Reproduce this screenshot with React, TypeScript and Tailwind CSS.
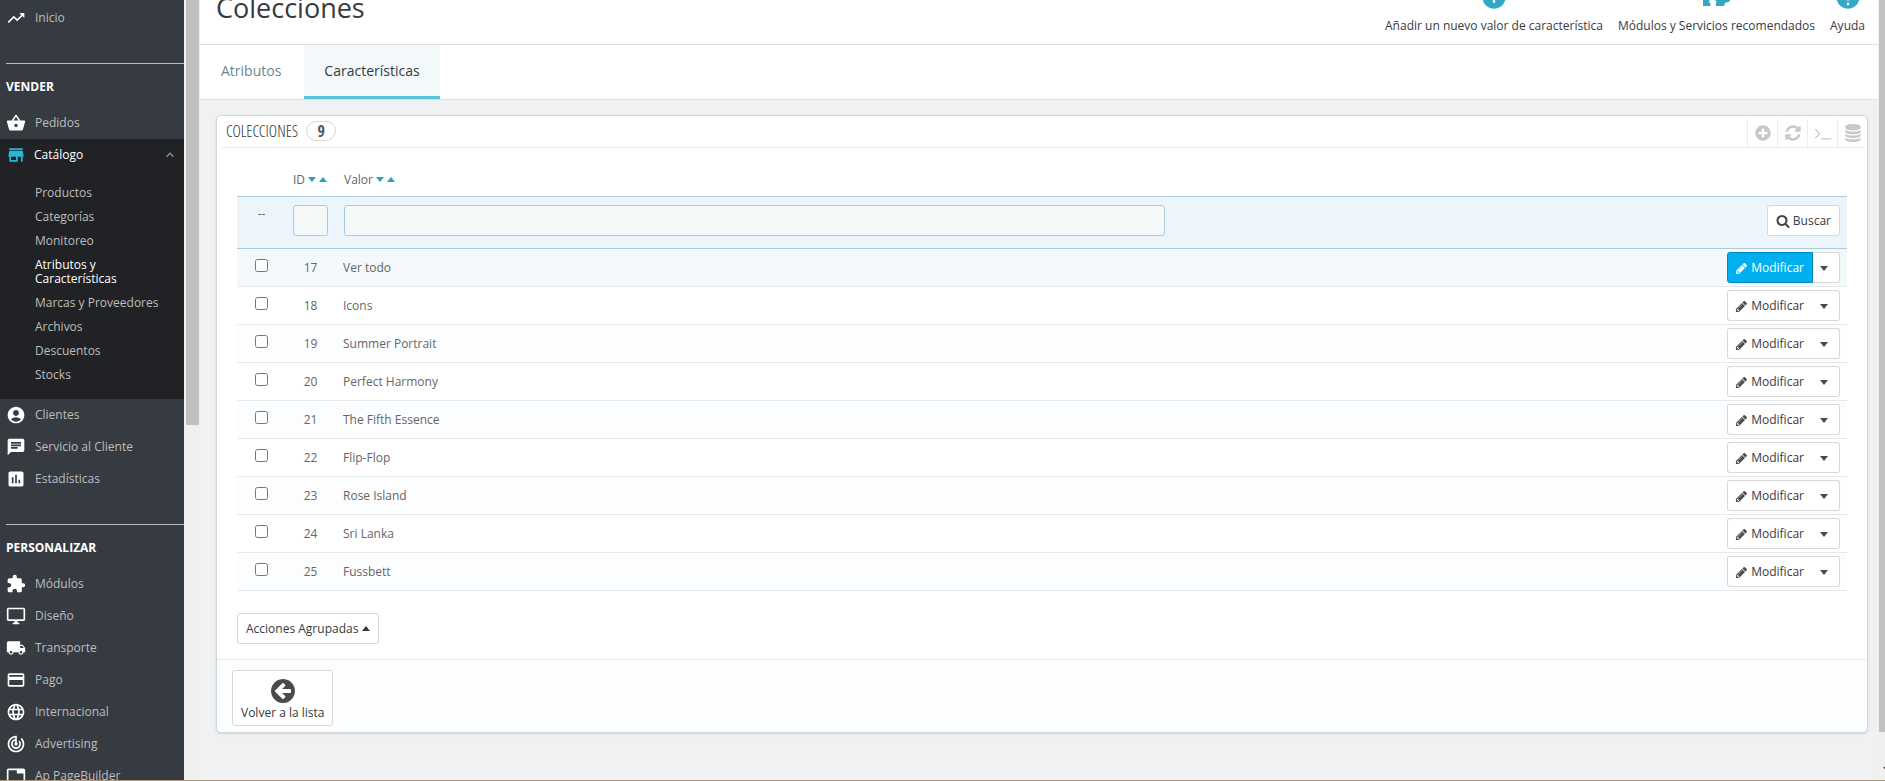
import React, { useState } from 'react';
import type { IconType } from 'react-icons';
import {
  MdAccountCircle,
  MdAddCircle,
  MdAssessment,
  MdChat,
  MdCreditCard,
  MdExtension,
  MdHelp,
  MdKeyboardArrowUp,
  MdLanguage,
  MdLocalShipping,
  MdOutlineDesktopWindows,
  MdShoppingBasket,
  MdStore,
  MdTab,
  MdTrackChanges,
  MdTrendingUp,
} from 'react-icons/md';

const GLYPHS = {
  pencil: 'M491 1536l91-91-235-235-91 91v107h128v128h107zm523-928q0-22-22-22-10 0-17 7l-542 542q-7 7-7 17 0 22 22 22 10 0 17-7l542-542q7-7 7-17zm-54-192l416 416-832 832h-416v-416zm683 96q0 53-37 90l-166 166-416-416 166-165q36-38 90-38 53 0 91 38l235 234q37 39 37 91z',
  search: 'M1216 832q0-185-131.5-316.5t-316.5-131.5-316.5 131.5-131.5 316.5 131.5 316.5 316.5 131.5 316.5-131.5 131.5-316.5zm512 832q0 52-38 90t-90 38q-54 0-90-38l-343-342q-179 124-399 124-143 0-273.5-55.5t-225-150-150-225-55.5-273.5 55.5-273.5 150-225 225-150 273.5-55.5 273.5 55.5 225 150 150 225 55.5 273.5q0 220-124 399l343 343q37 37 37 90z',
  plus: 'M1344 960v-128q0-26-19-45t-45-19h-256v-256q0-26-19-45t-45-19h-128q-26 0-45 19t-19 45v256h-256q-26 0-45 19t-19 45v128q0 26 19 45t45 19h256v256q0 26 19 45t45 19h128q26 0 45-19t19-45v-256h256q26 0 45-19t19-45zm320-64q0 209-103 385.5t-279.5 279.5-385.5 103-385.5-103-279.5-279.5-103-385.5 103-385.5 279.5-279.5 385.5-103 385.5 103 279.5 279.5 103 385.5z',
  refresh: 'M1639 1056q0 5-1 7-64 268-268 434.5t-478 166.5q-146 0-282.5-55t-243.5-157l-129 129q-19 19-45 19t-45-19-19-45v-448q0-26 19-45t45-19h448q26 0 45 19t19 45-19 45l-137 137q71 66 161 102t187 36q134 0 250-65t186-179q11-17 53-117 8-23 30-23h192q13 0 22.5 9.5t9.5 22.5zm25-800v448q0 26-19 45t-45 19h-448q-26 0-45-19t-19-45 19-45l138-138q-148-137-349-137-134 0-250 65t-186 179q-11 17-53 117-8 23-30 23h-199q-13 0-22.5-9.5t-9.5-22.5v-7q65-268 270-434.5t480-166.5q146 0 284 55.5t245 156.5l130-129q19-19 45-19t45 19 19 45z',
  terminal: 'M649 983l-466 466q-10 10-23 10t-23-10l-50-50q-10-10-10-23t10-23l393-393-393-393q-10-10-10-23t10-23l50-50q10-10 23-10t23 10l466 466q10 10 10 23t-10 23zm1079 457v64q0 14-9 23t-23 9h-960q-14 0-23-9t-9-23v-64q0-14 9-23t23-9h960q14 0 23 9t9 23z',
  database: 'M896 768q237 0 443-43t325-127v170q0 69-103 128t-280 93.5-385 34.5-385-34.5-280-93.5-103-128v-170q119 84 325 127t443 43zm0 768q237 0 443-43t325-127v170q0 69-103 128t-280 93.5-385 34.5-385-34.5-280-93.5-103-128v-170q119 84 325 127t443 43zm0-384q237 0 443-43t325-127v170q0 69-103 128t-280 93.5-385 34.5-385-34.5-280-93.5-103-128v-170q119 84 325 127t443 43zm0-1152q208 0 385 34.5t280 93.5 103 128v128q0 69-103 128t-280 93.5-385 34.5-385-34.5-280-93.5-103-128v-128q0-69 103-128t280-93.5 385-34.5z',
  back: 'M1408 960v-128q0-26-19-45t-45-19h-502l189-189q19-19 19-45t-19-45l-91-91q-18-18-45-18t-45 18l-362 362-91 91q-18 18-18 45t18 45l91 91 362 362q18 18 45 18t45-18l91-91q18-18 18-45t-18-45l-189-189h502q26 0 45-19t19-45zm256-64q0 209-103 385.5t-279.5 279.5-385.5 103-385.5-103-279.5-279.5-103-385.5 103-385.5 279.5-279.5 385.5-103 385.5 103 279.5 279.5 103 385.5z',
};

const Glyph = ({ name, className }: { name: keyof typeof GLYPHS; className: string }) => (
  <svg viewBox="0 0 1792 1792" fill="currentColor" aria-hidden="true" className={className}>
    <path d={GLYPHS[name]} />
  </svg>
);

const Caret = ({ up = false, className = 'w-2' }: { up?: boolean; className?: string }) => (
  <svg viewBox="0 0 8 5" fill="currentColor" aria-hidden="true" className={className}>
    <path d={up ? 'M0 5L4 0L8 5Z' : 'M0 0L4 5L8 0Z'} />
  </svg>
);

// Puzzle piece used by the modules button of the toolbar
const PuzzleIcon = ({ className }: { className?: string }) => (
  <svg viewBox="0 0 28 28" fill="currentColor" aria-hidden="true" className={className}>
    <path d="M1 7h7c1-1-1-2-1-4 0-4 8-4 8 0 0 2-2 3-1 4h8v7c1 1 2-1 4-1 3 0 3 6 0 6l-3 1-1 3h-8c-1-2 1-3 0-5-1-2-6-2-7 0 0 2 3 3 1 5H1z" />
  </svg>
);

interface MenuEntry {
  icon: IconType;
  label: string;
}

const SELL_MENU: MenuEntry[] = [
  { icon: MdAccountCircle, label: 'Clientes' },
  { icon: MdChat, label: 'Servicio al Cliente' },
  { icon: MdAssessment, label: 'Estadísticas' },
];

const CUSTOMIZE_MENU: MenuEntry[] = [
  { icon: MdExtension, label: 'Módulos' },
  { icon: MdOutlineDesktopWindows, label: 'Diseño' },
  { icon: MdLocalShipping, label: 'Transporte' },
  { icon: MdCreditCard, label: 'Pago' },
  { icon: MdLanguage, label: 'Internacional' },
  { icon: MdTrackChanges, label: 'Advertising' },
  { icon: MdTab, label: 'Ap PageBuilder' },
];

const CATALOG_LINKS = [
  'Productos',
  'Categorías',
  'Monitoreo',
  'Atributos y Características',
  'Marcas y Proveedores',
  'Archivos',
  'Descuentos',
  'Stocks',
];

const ROWS = [
  { id: 17, value: 'Ver todo' },
  { id: 18, value: 'Icons' },
  { id: 19, value: 'Summer Portrait' },
  { id: 20, value: 'Perfect Harmony' },
  { id: 21, value: 'The Fifth Essence' },
  { id: 22, value: 'Flip-Flop' },
  { id: 23, value: 'Rose Island' },
  { id: 24, value: 'Sri Lanka' },
  { id: 25, value: 'Fussbett' },
];

const MenuItem = ({ icon: Icon, label }: MenuEntry) => (
  <li>
    <a href="#" className="flex h-8 items-center gap-[9px] pl-1.5 text-[#bebebe] hover:text-white">
      <Icon className="size-5 text-white" />
      {label}
    </a>
  </li>
);

const MenuTitle = ({ children }: { children: React.ReactNode }) => (
  <h2 className="ml-1.5 mt-[29px] h-11 border-t border-[#bebebe] pt-[15px] font-bold leading-4 text-white">
    {children}
  </h2>
);

const Sidebar = () => (
  <nav className="h-screen w-46 shrink-0 overflow-hidden bg-[#363a41] pt-0.5">
    <ul>
      <MenuItem icon={MdTrendingUp} label="Inicio" />
    </ul>
    <MenuTitle>VENDER</MenuTitle>
    <ul>
      <MenuItem icon={MdShoppingBasket} label="Pedidos" />
      <li className="bg-[#202226] pb-3">
        <a href="#" className="flex h-8 items-center gap-2 pl-1.5 pr-1.5 text-white">
          <MdStore className="size-5 text-[#25b9d7]" />
          <span className="flex-1">Catálogo</span>
          <MdKeyboardArrowUp className="size-4 text-[#8a8e93]" />
        </a>
        <ul className="pt-2.5">
          {CATALOG_LINKS.map(label => (
            <li key={label}>
              <a
                href="#"
                className={`block py-[5px] pl-[35px] pr-5 leading-[14px] ${
                  label.startsWith('Atributos') ? 'text-white' : 'text-[#bebebe]'
                }`}
              >
                {label}
              </a>
            </li>
          ))}
        </ul>
      </li>
      {SELL_MENU.map(item => <MenuItem key={item.label} {...item} />)}
    </ul>
    <MenuTitle>PERSONALIZAR</MenuTitle>
    <ul>
      {CUSTOMIZE_MENU.map(item => <MenuItem key={item.label} {...item} />)}
    </ul>
  </nav>
);

interface ToolbarButtonProps {
  icon: React.ComponentType<{ className?: string }>;
  label: string;
}

const ToolbarButton = ({ icon: Icon, label }: ToolbarButtonProps) => (
  <a href="#" className="flex flex-col items-center text-[#363a41]">
    <Icon className="size-7 text-[#34a9c6]" />
    <span className="mt-[5px] leading-5">{label}</span>
  </a>
);

const PageHeader = () => (
  <header className="border-b border-[#dadfe2] bg-white">
    <div className="flex h-11 items-end justify-between pl-4 pr-[13px]">
      <h1 className="pb-[18px] text-[27px] leading-9 text-[#363a41]">Colecciones</h1>
      <div className="flex gap-[15px] pb-2">
        <ToolbarButton icon={MdAddCircle} label="Añadir un nuevo valor de característica" />
        <ToolbarButton icon={PuzzleIcon} label="Módulos y Servicios recomendados" />
        <ToolbarButton icon={MdHelp} label="Ayuda" />
      </div>
    </div>
    <div className="flex h-[55px] border-t border-[#dadfe2] text-sm">
      <a href="#" className="flex items-center pb-0.5 pl-[21px] pr-[23px] text-[#6c868e]">Atributos</a>
      <a href="#" className="flex items-center border-b-3 border-[#5bc4da] bg-[#f3f8fb] px-5 pt-px text-[#363a41]">
        Características
      </a>
    </div>
  </header>
);

const SortHeader = ({ label }: { label: string }) => (
  <span className="flex items-center gap-[3px]">
    {label}
    <button type="button" aria-label={`${label} descendente`} className="text-[#2a9fc4]"><Caret className="w-2" /></button>
    <button type="button" aria-label={`${label} ascendente`} className="text-[#2a9fc4]"><Caret up className="w-2" /></button>
  </span>
);

const INPUT = 'block h-[31px] w-full rounded-[3px] border border-[#a9cbdc] bg-[#f5f8f9] px-2';
const BUTTON = 'flex h-[31px] items-center border border-[#d8d8d8] bg-white pt-px text-[#363a41]';

const CollectionsTable = () => {
  const [selected, setSelected] = useState<number[]>([]);

  const toggle = (id: number) =>
    setSelected(prev => (prev.includes(id) ? prev.filter(x => x !== id) : [...prev, id]));

  return (
    <table className="w-full table-fixed border-collapse text-left text-[#666]">
      <colgroup>
        <col className="w-[49px]" />
        <col className="w-[51px]" />
        <col className="w-[52%]" />
        <col />
      </colgroup>
      <thead>
        <tr className="h-8">
          <th aria-label="Selección" />
          <th className="px-[7px] font-normal"><SortHeader label="ID" /></th>
          <th className="px-[7px] font-normal"><SortHeader label="Valor" /></th>
          <th aria-label="Acciones" />
        </tr>
        <tr className="h-[52px] border-y border-[#a9cbdc] bg-[#ebf5fb] align-top">
          <th className="pt-[9px] text-center font-normal leading-4">--</th>
          <th className="pl-[7px] pr-[9px] pt-2"><input aria-label="Filtrar por ID" className={INPUT} /></th>
          <th className="pl-[7px] pr-[9px] pt-2"><input aria-label="Filtrar por valor" className={INPUT} /></th>
          <th className="pr-[7px] pt-2 font-normal">
            <button type="button" className={`${BUTTON} ml-auto gap-[3px] rounded-[3px] px-2`}>
              <Glyph name="search" className="size-3.5 text-[#444]" />
              Buscar
            </button>
          </th>
        </tr>
      </thead>
      <tbody>
        {ROWS.map(({ id, value }, i) => (
          <tr
            key={id}
            className={`h-[38px] border-b border-[#e4e9ec] ${
              i === 0 ? 'bg-[#f3f8fb]' : i % 2 === 0 ? 'bg-[#fcfdfe]' : 'bg-white'
            }`}
          >
            <td>
              <input
                type="checkbox"
                aria-label={`Seleccionar ${value}`}
                checked={selected.includes(id)}
                onChange={() => toggle(id)}
                className="mx-auto mb-1 block size-[13px]"
              />
            </td>
            <td className="pr-0.5 pt-0.5 text-center">{id}</td>
            <td className="px-1.5 pt-0.5">{value}</td>
            <td className="pr-[7px] pt-px">
              <div className="flex justify-end">
                <button
                  type="button"
                  className={
                    i === 0
                      ? 'flex h-[31px] items-center gap-[3px] rounded-l-[3px] border border-[#008abd] bg-[#00aff0] pl-[7px] pr-2 pt-px text-white'
                      : `${BUTTON} gap-[3px] rounded-l-[3px] border-r-0 pl-[7px] pr-[9px]`
                  }
                >
                  <Glyph name="pencil" className={i === 0 ? 'size-[13px]' : 'size-[13px] text-[#4a4a4a]'} />
                  Modificar
                </button>
                <button
                  type="button"
                  aria-label="Más acciones"
                  className={`${BUTTON} w-[27px] rounded-r-[3px] border-l-0 pl-[7px]`}
                >
                  <Caret className="w-2 text-[#4a4a4a]" />
                </button>
              </div>
            </td>
          </tr>
        ))}
      </tbody>
    </table>
  );
};

const PANEL_TOOLS: { name: keyof typeof GLYPHS; label: string }[] = [
  { name: 'plus', label: 'Añadir' },
  { name: 'refresh', label: 'Refrescar' },
  { name: 'terminal', label: 'Mostrar consulta SQL' },
  { name: 'database', label: 'Exportar a gestor SQL' },
];

const CONDENSED_LIGHT = "font-['Open_Sans_Condensed_Light','Open_Sans_Condensed',sans-serif]";
const CONDENSED_BOLD = "font-['Open_Sans_Condensed',sans-serif]";

const App: React.FC = () => {
  return (
    <div className="flex h-screen overflow-hidden border-b border-[#a8977f] bg-[#eff1f2] font-['Open_Sans',sans-serif] text-xs">
      <Sidebar />

      {/* Sidebar scroll track */}
      <div className="w-4 shrink-0 bg-[#f0f0f0] pl-0.5 pr-px">
        <div className="h-[425px] bg-[#c1c1c1]" />
      </div>

      <div className="min-w-0 flex-1">
        <PageHeader />
        <main className="pl-4 pr-2.5 pt-[15px]">
          <section className="rounded-[5px] border border-[#d3d8db] bg-white shadow-sm">
            <div className="mx-1 flex h-8 items-center border-b border-[#eaedef] pb-0.5 pl-[5px]">
              <h2 className={`${CONDENSED_LIGHT} text-base text-[#333]`}>COLECCIONES</h2>
              <span className={`${CONDENSED_BOLD} ml-2 flex h-5 w-[30px] items-center justify-center rounded-full border border-[#d8d8d8] text-base font-bold text-[#555]`}>
                9
              </span>
              <div className="-mb-0.5 -mr-1 ml-auto flex h-7 self-end">
                {PANEL_TOOLS.map(({ name, label }) => (
                  <button
                    key={name}
                    type="button"
                    aria-label={label}
                    className="flex w-[30px] items-center justify-center border-l border-[#eaedef] text-[#c8c8c8]"
                  >
                    <Glyph name={name} className="size-[18px]" />
                  </button>
                ))}
              </div>
            </div>

            <div className="px-5 pb-[15px] pt-4">
              <CollectionsTable />
              <button type="button" className={`${BUTTON} mt-[22px] gap-1 rounded-[3px] px-2`}>
                Acciones Agrupadas
                <Caret up className="w-2" />
              </button>
            </div>

            <footer className="rounded-b-[5px] border-t border-[#e4e9ec] bg-[#fcfdfe] px-[15px] pb-1.5 pt-2.5">
              <button
                type="button"
                className="flex h-14 flex-col items-center justify-center rounded-[3px] border border-[#d8d8d8] bg-white px-2 pt-0.5 text-[#363a41]"
              >
                <Glyph name="back" className="size-7 text-[#4a4a4a]" />
                <span className="leading-4">Volver a la lista</span>
              </button>
            </footer>
          </section>
        </main>
      </div>

      {/* Page scroll track */}
      <div className="flex w-[7px] shrink-0 flex-col justify-between overflow-hidden bg-[#f0f0f0] pb-2 pl-px">
        <div className="h-[732px] bg-[#c1c1c1]" />
        <Caret className="ml-1 w-2 text-[#505050]" />
      </div>
    </div>
  );
};

export default App;
